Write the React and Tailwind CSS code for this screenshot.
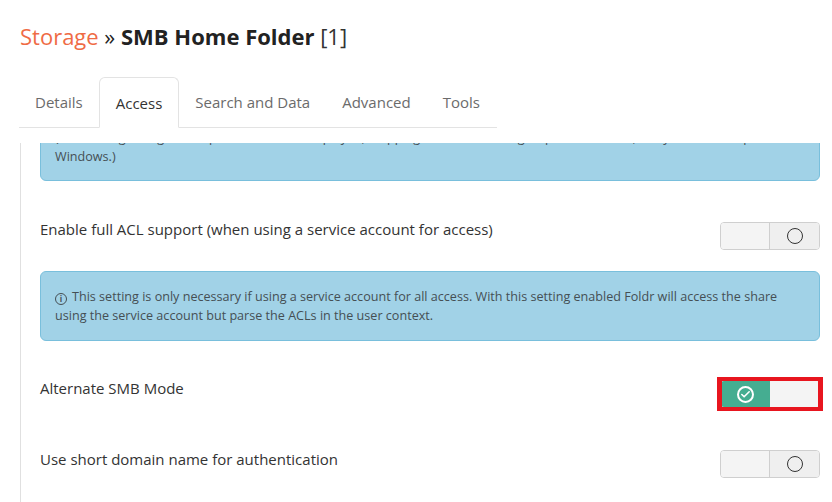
import { Check } from "lucide-react";

function Toggle({ on = false }) {
  return (
    <div className="flex h-[28px] w-[100px] shrink-0 overflow-hidden rounded-[4px] border border-[#cfcfcf]">
      {on ? (
        <>
          <div className="flex w-1/2 items-center justify-center bg-[#45ad91]">
            <span className="flex h-[17px] w-[17px] items-center justify-center rounded-full border-2 border-white">
              <Check size={11} strokeWidth={3.5} className="text-white" />
            </span>
          </div>
          <div className="w-1/2 bg-[#f4f4f4]" />
        </>
      ) : (
        <>
          <div className="w-1/2 border-r border-[#cfcfcf] bg-[#f4f4f4]" />
          <div className="flex w-1/2 items-center justify-center bg-[#efefef]">
            <span className="h-[16px] w-[16px] rounded-full border-[1.5px] border-[#333]" />
          </div>
        </>
      )}
    </div>
  );
}

function InfoBox({ children, className = "" }) {
  return (
    <div
      className={`rounded-[6px] border border-[#79bfdc] bg-[#a1d2e7] px-[14px] text-[12.6px] leading-[19px] text-[#454f54] ${className}`}
    >
      {children}
    </div>
  );
}

const tabs = ["Details", "Access", "Search and Data", "Advanced", "Tools"];

export default function App() {
  return (
    <div
      className="relative h-[502px] w-[832px] overflow-hidden bg-white text-[#333]"
      style={{ fontFamily: '"Open Sans", "Noto Sans", sans-serif' }}
    >
      <h1 className="px-[20px] pt-[20px] text-[22px] leading-[32px]">
        <span className="text-[#ef6b45]">Storage</span>
        <span className="text-[#222]"> » </span>
        <span className="font-bold text-[#222]">SMB Home Folder</span>
        <span className="text-[#333]"> [1]</span>
      </h1>

      <div className="ml-[19px] mt-[25px] flex w-[478px] border-b border-[#e3e3e3] text-[15px] leading-[20px]">
        {tabs.map((t) => (
          <div
            key={t}
            className={
              t === "Access"
                ? "-mb-px flex h-[51px] items-center rounded-t-[6px] border border-b-white border-[#e3e3e3] bg-white px-[16px] text-[#333]"
                : "flex h-[50px] items-center px-[16px] text-[#6b6b6b]"
            }
          >
            {t}
          </div>
        ))}
      </div>

      <div className="ml-[20px] mt-[15px] h-[400px] overflow-hidden border-l border-[#e0e0e0] pl-[19px] pr-[12px]">
        <InfoBox className="-mt-[30px] py-[14px]">
          <p className="overflow-hidden whitespace-nowrap">
            (This setting changes how permissions are displayed, mapping Foldr users and groups to the share, as by Windows Explorer in
          </p>
          <p>Windows.)</p>
        </InfoBox>

        <div className="mt-[37px] flex items-start justify-between">
          <span className="text-[15px] leading-[22px]">Enable full ACL support (when using a service account for access)</span>
          <div className="mt-[4px]">
            <Toggle />
          </div>
        </div>

        <InfoBox className="mt-[21px] py-[15px]">
          <p>
            <span className="mr-[5px] inline-flex h-[12px] w-[12px] translate-y-[1px] items-center justify-center rounded-full border-[1.5px] border-[#454f54] text-[8px] font-bold leading-none">
              i
            </span>
            This setting is only necessary if using a service account for all access. With this setting enabled Foldr will access the share
          </p>
          <p>using the service account but parse the ACLs in the user context.</p>
        </InfoBox>

        <div className="mt-[36px] flex items-start justify-between">
          <span className="text-[15px] leading-[22px]">Alternate SMB Mode</span>
          <div className="relative mt-[3px]">
            <Toggle on />
            <div className="absolute -left-[3px] -right-[3px] -top-[3px] -bottom-[3px] border-x-[5px] border-y-[4px] border-[#e8151f]" />
          </div>
        </div>

        <div className="mt-[40px] flex items-start justify-between">
          <span className="text-[15px] leading-[22px]">Use short domain name for authentication</span>
          <div className="mt-[2px]">
            <Toggle />
          </div>
        </div>
      </div>
    </div>
  );
}
